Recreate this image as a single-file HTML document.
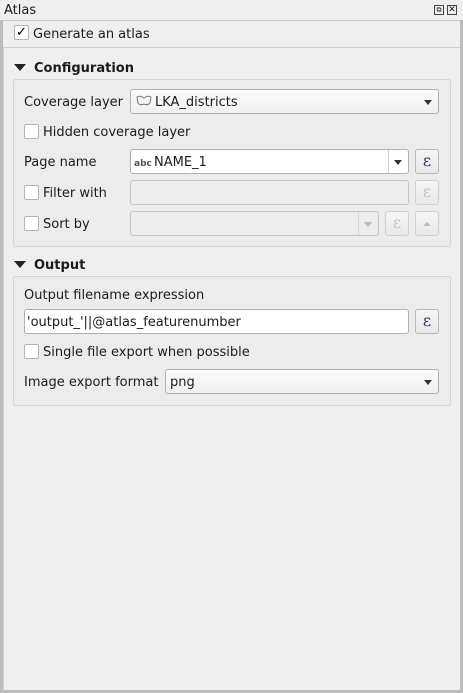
<!DOCTYPE html>
<html><head><style>
*{box-sizing:border-box;margin:0;padding:0}
body{width:463px;height:693px;background:#efefef;font-family:"DejaVu Sans","Liberation Sans",sans-serif;font-size:13px;color:#1b1b1b;position:relative;overflow:hidden}
.a{position:absolute}
.t{position:absolute;line-height:16px;white-space:nowrap;margin-top:2px}
.cb{position:absolute;width:15px;height:15px;border:1px solid #b4b4b4;background:#fff;border-radius:2px}
.f{position:absolute;border:1px solid #b0b0b0;border-radius:3px;background:#fff}
.d{background:#ececec;border-color:#c4c4c4}
.btn{position:absolute;width:24px;height:25px;border:1px solid #b8b8b8;border-radius:3px;background:linear-gradient(#f6f6f6,#e8e8e8);text-align:center;font-family:"DejaVu Serif",serif;font-size:16px;line-height:22px;color:#5a2a6a}
.btn.dis{color:#c4c4c4;border-color:#cfcfcf}
.arr{position:absolute;width:0;height:0;border-left:4px solid transparent;border-right:4px solid transparent;border-top:5px solid #333}
.gb{position:absolute;border:1px solid #d6d6d6;border-radius:2px;background:#ececec}
.tri{position:absolute;width:0;height:0;border-left:6px solid transparent;border-right:6px solid transparent;border-top:7px solid #222}
</style></head><body>
<div class="a" style="left:0;top:0;width:463px;height:20px;background:#efefef"></div>
<div class="t" style="left:4px;top:1px">Atlas</div>
<div class="a" style="left:434px;top:5px;width:10px;height:10px;border:1px solid #444;font-size:7px;line-height:8px;text-align:center">⧉</div>
<div class="a" style="left:447px;top:5px;width:10px;height:10px;border:1px solid #444;font-size:9px;line-height:8px;text-align:center">✕</div>
<div class="a" style="left:0;top:20px;width:463px;height:673px;border:3px solid #bcbcbc;border-top:1px solid #c8c8c8"></div>
<div class="a" style="left:3px;top:47px;width:457px;height:1px;background:#cfcfcf"></div>
<div class="a" style="left:3px;top:48px;width:1px;height:642px;background:#cfcfcf"></div>
<div class="cb" style="left:14px;top:25px;text-align:center;line-height:13px;font-size:13px;color:#000">✓</div>
<div class="t" style="left:33px;top:25px">Generate an atlas</div>

<div class="tri" style="left:14px;top:64px"></div>
<div class="t" style="left:34px;top:59px;font-weight:bold">Configuration</div>
<div class="gb" style="left:13px;top:79px;width:438px;height:168px"></div>
<div class="t" style="left:24px;top:93px">Coverage layer</div>
<div class="f" style="left:130px;top:89px;width:309px;height:25px;background:linear-gradient(#fbfbfb,#f0f0f0)"></div>
<svg class="a" style="left:136px;top:95px" width="16" height="12"><path d="M1 2 Q4 0 8 3 Q12 0 15 2 L14 8 Q11 11 8 9 Q4 11 2 8 Z" fill="#f4f4f4" stroke="#777"/></svg>
<div class="t" style="left:155px;top:93px">LKA_districts</div>
<div class="arr" style="left:424px;top:100px"></div>
<div class="cb" style="left:24px;top:124px"></div>
<div class="t" style="left:43px;top:123px">Hidden coverage layer</div>

<div class="t" style="left:24px;top:153px">Page name</div>
<div class="f" style="left:130px;top:149px;width:279px;height:25px"></div>
<div class="a" style="left:388px;top:150px;width:1px;height:23px;background:#ccc"></div>
<div class="arr" style="left:394px;top:160px"></div>
<div class="t" style="left:134px;top:154px;font-size:9px;font-weight:bold;color:#555">abc</div>
<div class="t" style="left:154px;top:153px">NAME_1</div>
<div class="btn" style="left:415px;top:149px">ε</div>

<div class="cb" style="left:24px;top:185px"></div>
<div class="t" style="left:43px;top:184px">Filter with</div>
<div class="f d" style="left:130px;top:180px;width:279px;height:25px"></div>
<div class="btn dis" style="left:415px;top:180px">ε</div>

<div class="cb" style="left:24px;top:216px"></div>
<div class="t" style="left:43px;top:215px">Sort by</div>
<div class="f d" style="left:130px;top:211px;width:249px;height:25px"></div>
<div class="a" style="left:358px;top:212px;width:1px;height:23px;background:#d4d4d4"></div>
<div class="arr" style="left:364px;top:222px;border-top-color:#bbb"></div>
<div class="btn dis" style="left:385px;top:211px">ε</div>
<div class="btn dis" style="left:415px;top:211px"><div class="arr" style="left:7px;top:10px;border-top:none;border-bottom:4px solid #bbb"></div></div>

<div class="tri" style="left:14px;top:261px"></div>
<div class="t" style="left:34px;top:256px;font-weight:bold">Output</div>
<div class="gb" style="left:13px;top:276px;width:438px;height:130px"></div>
<div class="t" style="left:24px;top:286px">Output filename expression</div>
<div class="f" style="left:24px;top:309px;width:385px;height:25px"></div>
<div class="t" style="left:27px;top:313px">'output_'||@atlas_featurenumber</div>
<div class="btn" style="left:415px;top:309px">ε</div>
<div class="cb" style="left:24px;top:344px"></div>
<div class="t" style="left:43px;top:343px">Single file export when possible</div>
<div class="t" style="left:24px;top:373px">Image export format</div>
<div class="f" style="left:165px;top:369px;width:274px;height:25px;background:linear-gradient(#fbfbfb,#f0f0f0)"></div>
<div class="t" style="left:170px;top:373px">png</div>
<div class="arr" style="left:424px;top:380px"></div>
</body></html>
